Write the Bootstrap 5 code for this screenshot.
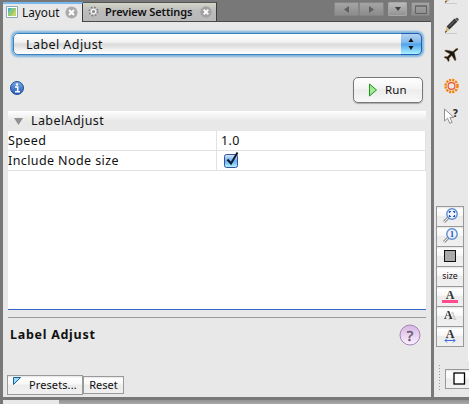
<!DOCTYPE html>
<html lang="en">
<head>
<meta charset="utf-8">
<title>Layout</title>
<link href="https://cdn.jsdelivr.net/npm/bootstrap@5.3.0/dist/css/bootstrap.min.css" rel="stylesheet">
<style>
body{width:469px;height:404px;overflow:hidden;background:#787878;font-family:"Noto Sans","Open Sans",sans-serif;font-size:12.5px;line-height:18px;color:#111;white-space:nowrap}
svg{display:block;flex:none}
.workspace{height:397px;padding-left:3px;gap:3px}
.panel{width:428px}
.tabs{height:22px;padding-top:2px;border-bottom:1px solid #484848}
.tab-a{width:80px;height:20px;margin-bottom:-1px;background:#e8e8e8;border-top:2px solid #79b8ee;border-right:1px solid #3c3c3c;padding:0 0 2px 3px;font-size:11.8px}
.tab-b{width:134px;height:19px;background:linear-gradient(#d3d5c7,#bcbcbc 45%,#b8b8b8);border-right:1px solid #3c3c3c;border-top:1px solid #555;padding:0 0 1px 5px;font-size:11px;font-weight:600}
.tab-a span{margin-left:4px;width:39px}
.tab-b span{margin-left:6px;width:87px;letter-spacing:-.08px}
.winbtn{height:14px;border:1px solid #858585;border-radius:1px;background:linear-gradient(#a4a4a4,#8c8c8c)}
.winbtn.on{background:linear-gradient(#b9b9b9,#939393);border-color:#a6a6a6}
.content{background:#e8e8e8;padding:11px 5px 0}
.combo{width:409px;height:22px;margin:0 0 0 5px;border:1px solid #3e82bc;border-radius:5px;box-shadow:0 0 2px 1.5px #7db3df;background:linear-gradient(#fff,#f2f2f2 40%,#dadada 52%,#f2f2f2 80%,#fff);padding-left:12px;letter-spacing:.43px}
.combo span{padding-top:1px}
.combo-end{width:21px;height:22px;margin-right:-1px;border:1px solid #235fb5;border-left:0;border-radius:0 5px 5px 0;background:linear-gradient(#b5d3f0,#83baed 40%,#50a6ec 52%,#8fdafa 85%,#a9f3ff)}
.runrow{height:26px;margin-top:22px;padding:0 3px 0 2px}
.run{width:70px;height:26px;border:1px solid #777;border-radius:5px;background:linear-gradient(#fff,#f3f3f3 45%,#ececec 50%,#f9f9f9);box-shadow:0 1px 1px #aaa;padding-left:15px;font-size:11.5px;gap:8px;letter-spacing:.1px}
.sheet{height:199px;background:#fff;margin-top:8px;border-bottom:1px solid #3569c8;letter-spacing:.4px}
.group-head{height:20px;background:linear-gradient(#fff,#e8e8e8 50%);padding-left:6px;gap:8px}
.prop{height:20px;border-bottom:1px solid #e2e2e2;border-right:1px solid #e2e2e2}
.prop-name{width:209px;height:19px;line-height:20px;border-right:1px solid #e2e2e2}
.divider{height:1px;margin-top:7px;background:#999}
.desc{height:34px;margin-bottom:1px;padding:0 5px 0 2px;font-weight:700;letter-spacing:.72px}
.btns{padding-top:22px;margin-left:-1px;font-size:11px}
.flatbtn{border:1px solid #999;background:linear-gradient(#e4e4e4,#fff 12%,#f7f7f7 45%,#ececec 50%,#f0f0f0)}
.presets{width:76px;height:20px;padding-left:5px;gap:7px;letter-spacing:.1px}
.reset{width:41px;height:18px}
.side{width:35px;background:#e8e8e8}
.rail{width:34px;height:361px}
.canvas-edge{width:1px;height:361px;background:#fff}
.glyphs{height:206px}
.tool{width:28px;height:20px;margin-left:2px;border-bottom-width:0}
.toolset{height:140px}
.toolset .tool:last-child{height:21px;border-bottom-width:1px}
.ghosted{filter:drop-shadow(4px 1px 0 #ccc)}
.dots{width:1px;height:25px;margin-left:5px;background:repeating-linear-gradient(#999 0 1px,transparent 1px 3px)}
.swatchbtn{width:26px;height:20px;margin-left:5px;border-right:0;padding-left:7px}
.bottomrow{height:32px;padding-top:4px;overflow:hidden}
.status{height:4px;margin:3px 0 0 3px;background:linear-gradient(#929292,#aaa)}
.status-tab{width:56px;height:4px;background:#e8e8e8}
</style>
</head>
<body>
<svg width="0" height="0" class="position-absolute"><defs>
<linearGradient id="gb" x2="0" y2="1"><stop stop-color="#77a9e6"/><stop offset="1" stop-color="#2459b3"/></linearGradient>
<linearGradient id="gp" x2="0" y2="1"><stop stop-color="#d5b5e4"/><stop offset="1" stop-color="#fbf2ff"/></linearGradient>
<linearGradient id="gc" x2="0" y2="1"><stop stop-color="#d7e9fa"/><stop offset=".5" stop-color="#67b0ed"/><stop offset="1" stop-color="#b0f7ff"/></linearGradient>
</defs></svg>
<div class="workspace d-flex">
 <main class="panel d-flex flex-column">
  <div class="tabs d-flex">
   <div class="tab-a d-flex align-items-center">
    <svg width="12" height="12"><path d="M.5.5h11v11H.5z" fill="#fff" stroke="#8ba8bc"/><path d="M2 2h8v8H2z" fill="#91c779"/><path d="M2 2h4L2 7z" fill="#4bb4c8"/><path d="M10 3v7H5z" fill="#c2d66c"/></svg>
    <span>Layout</span>
    <svg class="ms-1" width="13" height="13"><circle cx="6.5" cy="6.5" r="6" fill="#aaa"/><path d="M4 4l5 5M9 4L4 9" stroke="#fff" stroke-width="2"/></svg>
   </div>
   <div class="tab-b d-flex align-items-center">
    <svg width="11" height="11"><circle cx="5.500" cy="5.500" r="3.700" fill="#eee" stroke="#808080" stroke-width="2.600" stroke-dasharray="1.600 1.306"/><circle cx="5.500" cy="5.500" r="3.300" fill="#f2f2f2" stroke="#999" stroke-width=".5"/><circle cx="5.500" cy="5.500" r="1.500" fill="#858585"/></svg>
    <span>Preview Settings</span>
    <svg class="ms-2" width="12" height="12"><circle cx="6" cy="6" r="5.700" fill="#a2a2a2"/><path d="M3.700 3.700l4.600 4.600M8.300 3.700L3.700 8.300" stroke="#fff" stroke-width="1.800"/></svg>
   </div>
   <div class="d-flex ms-auto me-1">
    <div class="winbtn d-flex align-items-center justify-content-center" style="width:25px"><svg width="5" height="7"><path d="M5 0v7L0 3.500z" fill="#606060"/></svg></div>
    <div class="winbtn d-flex align-items-center justify-content-center" style="width:25px"><svg width="5" height="7"><path d="M0 0v7l5-3.500z" fill="#606060"/></svg></div>
    <div class="winbtn on d-flex align-items-center justify-content-center ms-1" style="width:19px"><svg width="6" height="4"><path d="M0 0h6L3 4z" fill="#404040"/></svg></div>
    <div class="winbtn d-flex align-items-center justify-content-center ms-1" style="width:19px;margin-right:-3px"><svg width="12" height="9"><path d="M.5 1h11v7.500H.5zM0 1h12" fill="none" stroke="#626262"/></svg></div>
   </div>
  </div>
  <section class="content flex-grow-1">
   <div class="combo d-flex align-items-center"><span>Label Adjust</span>
    <div class="combo-end ms-auto d-flex align-items-center justify-content-center"><svg width="6" height="12"><path d="M3 0l2.500 4H.5zM.5 8h5L3 12z" fill="#111"/></svg></div>
   </div>
   <div class="runrow d-flex justify-content-between align-items-center">
    <svg width="14" height="14" class="mb-1"><circle cx="7" cy="7" r="6.500" fill="url(#gb)" stroke="#234f9c"/><path d="M5 6h2.700v4.500M5 10.700h5" fill="none" stroke="#fff" stroke-width="1.500"/><circle cx="7" cy="3.500" r="1.200" fill="#fff"/></svg>
    <div class="run d-flex align-items-center"><svg width="8" height="14"><path d="M.5 1v12L7.500 7z" fill="#a9e797" stroke="#16991c"/></svg><span>Run</span></div>
   </div>
   <div class="sheet">
    <div class="group-head d-flex align-items-center"><svg width="9" height="7"><path d="M0 0h9L4.500 7z" fill="#929292"/></svg><span>LabelAdjust</span></div>
    <div class="prop d-flex align-items-center"><div class="prop-name">Speed</div><span class="ps-1">1.0</span></div>
    <div class="prop d-flex align-items-center"><div class="prop-name">Include Node size</div><svg class="ms-2 mb-1" width="15" height="17" overflow="visible"><rect x="-.5" y="4.500" width="13" height="13" rx="2" fill="url(#gc)" stroke="#3b4f9a"/><path d="M2.500 9.500l3.500 4 6.500-11" fill="none" stroke="#111b2e" stroke-width="2"/></svg></div>
   </div>
   <div class="divider"></div>
   <div class="desc d-flex align-items-center justify-content-between"><span>Label Adjust</span>
    <svg width="22" height="24"><circle cx="11" cy="12" r="10" fill="url(#gp)" stroke="#a684b5"/><text x="11.300" y="17.500" text-anchor="middle" font-family="Noto Sans" font-weight="400" font-size="15" fill="#69566f" stroke="#69566f" stroke-width=".4">?</text></svg>
   </div>
   <div class="btns d-flex align-items-center">
    <div class="presets flatbtn d-flex align-items-center"><svg width="9" height="9" class="mb-2"><path d="M.5.5h7l-7 7z" fill="#99dcfb" stroke="#14649c"/></svg><span>Presets...</span></div>
    <div class="reset flatbtn d-flex align-items-center justify-content-center">Reset</div>
   </div>
  </section>
 </main>
 <aside class="side">
  <div class="d-flex">
   <div class="rail">
    <div class="glyphs">
     <svg width="34" height="130">
      <g id="pen"><path d="M11 33.500h12" stroke="#ccc"/><path d="M14 28L22 20" stroke="#333" stroke-width="4"/><path d="M21 19l2-1.500 2 1.700-1.200 2z" fill="#555"/><path d="M15 26.500l6-6" stroke="#777"/><path d="M12.500 27l3 3-4 2.500z" fill="#d8b46c"/><path d="M10.800 33l2-1.200-.9-1.200z" fill="#222"/></g>
      <use href="#pen" y="-30"/>
      <path d="M24 49c-.6-.9-2-.4-3 .6l-1.900 1.900-7.400-1.500-1 1 5.400 3-2.700 2.800-2.500-.2-.8.8 2.700 1.400 1.500 2.800.9-.9-.2-2.500 2.800-2.700 3.200 5.300 1-1-1.700-7.300 2-1.800c1-.7 2-1 1.700-1.700z" fill="#161616" stroke="#7f5424" stroke-width=".5"/>
      <g fill="none"><circle cx="17.500" cy="86" r="6" stroke="#f6830b" stroke-width="2.500" stroke-dasharray="2.200 .94"/><circle cx="17.500" cy="86" r="3.400" stroke="#f05032" stroke-width="1.200"/></g>
      <path d="M10.500 109v12l3-2.700 2.300 5 2.300-1-2.200-4.900h4z" fill="#fff" stroke="#8f8f8f"/><text x="18.500" y="116.500" font-family="DejaVu Sans" font-weight="700" font-size="10" fill="#333">?</text>
     </svg>
    </div>
    <div class="toolset">
     <div class="tool flatbtn"><svg width="26" height="19"><path d="M12 10l-5 5" stroke="#999" stroke-width="3"/><path d="M12 10l-5 5" stroke="#eee"/><circle cx="15" cy="7" r="5.200" fill="#edf4ff" stroke="#608ccf" stroke-width="1.400"/><path d="M12.500 6V4.500H14M16 4.500h1.500V6M17.500 8v1.500H16M14 9.500h-1.500V8" fill="none" stroke="#2457c3" stroke-width="1.200"/></svg></div>
     <div class="tool flatbtn"><svg width="26" height="19"><path d="M12 10l-5 5" stroke="#999" stroke-width="3"/><path d="M12 10l-5 5" stroke="#eee"/><circle cx="15" cy="7" r="5.200" fill="#edf4ff" stroke="#608ccf" stroke-width="1.400"/><text x="15" y="10" text-anchor="middle" font-family="Liberation Serif" font-weight="700" font-size="9" fill="#2457c3">1</text></svg></div>
     <div class="tool flatbtn"><svg width="26" height="19"><rect x="7.500" y="3.500" width="11" height="11" fill="#aaa" stroke="#111"/></svg></div>
     <div class="tool flatbtn"><svg width="26" height="19"><text x="13" y="12" text-anchor="middle" font-family="Noto Sans" font-size="8.800" fill="#111">size</text></svg></div>
     <div class="tool flatbtn"><svg width="26" height="19"><text x="13" y="12" text-anchor="middle" font-family="Liberation Serif" font-weight="700" font-size="12" fill="#333">A</text><path d="M5 14.500h16" stroke="#ff4c91" stroke-width="3"/></svg></div>
     <div class="tool flatbtn"><svg width="26" height="19"><text class="ghosted" x="7" y="12" font-family="Liberation Serif" font-weight="700" font-size="12" fill="#333">A</text></svg></div>
     <div class="tool flatbtn"><svg width="26" height="19"><text x="13" y="11" text-anchor="middle" font-family="Liberation Serif" font-weight="700" font-size="12" fill="#333">A</text><path d="M8 13.500h10M10 11.500l-2 2 2 2M16 11.500l2 2-2 2" fill="none" stroke="#3e6bdc"/></svg></div>
    </div>
   </div>
   <div class="canvas-edge"></div>
  </div>
  <div class="bottomrow d-flex">
   <div class="dots"></div>
   <div class="swatchbtn flatbtn mt-1"><svg width="13" height="18"><rect x="1" y="3" width="10.500" height="11" fill="#fff" stroke="#000" stroke-width="1.300"/></svg></div>
  </div>
 </aside>
</div>
<div class="status"><div class="status-tab"></div></div>
<script src="https://cdn.jsdelivr.net/npm/bootstrap@5.3.0/dist/js/bootstrap.bundle.min.js"></script>
</body>
</html>
